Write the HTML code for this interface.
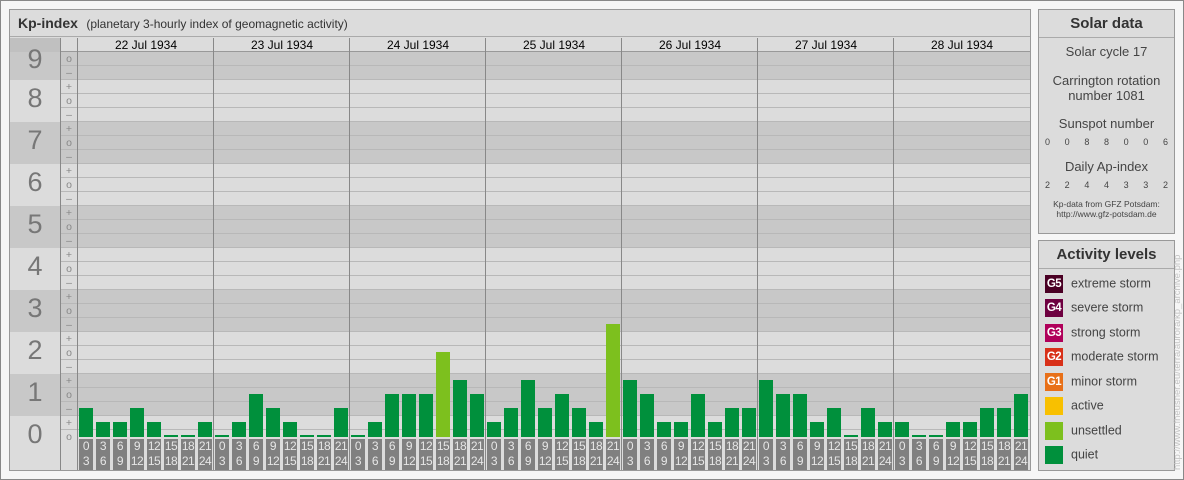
<!DOCTYPE html><html><head><style>
*{margin:0;padding:0;box-sizing:border-box}
body{width:1184px;height:480px;position:relative;background:#f6f6f6;font-family:"Liberation Sans",sans-serif;overflow:hidden}
.a{position:absolute}
#frame{left:0;top:0;width:1184px;height:480px;border:1px solid #888}
#main{left:9px;top:9px;width:1022px;height:462px;border:1px solid #999;background:#dcdcdc;overflow:hidden}
.band{position:absolute;left:0;width:1020px}
.dk{background:#c8c8c8}
.lt{background:#dcdcdc}
.num{position:absolute;left:0;width:50px;text-align:center;font-size:27px;color:#777}
.sub{position:absolute;left:51px;width:16px;text-align:center;font-size:10.5px;color:#888;line-height:14px}
.day{position:absolute;top:0;display:flex;gap:3px;align-items:flex-end}
.day div{width:14px;background:#00903c}
.day div.u{background:#7dc01e}
.lab{position:absolute;top:429px;display:flex;gap:3px}
.lab div{width:14px;height:31px;background:#808080;color:#e6e6e6;font-size:12px;line-height:15px;text-align:center;letter-spacing:-0.5px}
.dh{position:absolute;top:28px;width:136px;text-align:center;font-size:12px;color:#000;line-height:14px}
.vs{position:absolute;top:28px;width:1px;height:432px;background:#888}
.panel{position:absolute;left:1038px;width:137px;border:1px solid #999;background:#dcdcdc;color:#444}
.ph{height:28px;border-bottom:1px solid #aaa;text-align:center;font-weight:bold;font-size:15px;line-height:27px;color:#333}
.c{text-align:center;font-size:13px}
.row{display:flex;justify-content:space-between;padding:0 6px 0 6px;font-size:9px}
.lv{position:absolute;left:6px;font-size:12.5px;color:#444}
.lv span{display:inline-block;width:18px;height:18px;color:#fff;font-size:11.5px;font-weight:bold;text-align:center;line-height:18px;margin-right:8px;vertical-align:middle;letter-spacing:-0.5px}
</style></head><body>
<div class="a" id="frame"></div>
<div class="a" id="main">
 <div class="a" style="left:0;top:0;width:1020px;height:27px;border-bottom:1px solid #aaa;background:#dcdcdc;color:#333;line-height:26px;padding-left:8px"><b style="font-size:14px">Kp-index</b> <span style="font-size:12px;margin-left:4px">(planetary 3-hourly index of geomagnetic activity)</span></div>
 <div class="band dk" style="top:42px;height:28px"></div>
 <div class="band lt" style="top:70px;height:42px"></div>
 <div class="band dk" style="top:112px;height:42px"></div>
 <div class="band lt" style="top:154px;height:42px"></div>
 <div class="band dk" style="top:196px;height:42px"></div>
 <div class="band lt" style="top:238px;height:42px"></div>
 <div class="band dk" style="top:280px;height:42px"></div>
 <div class="band lt" style="top:322px;height:42px"></div>
 <div class="band dk" style="top:364px;height:42px"></div>
 <div class="band lt" style="top:406px;height:54px"></div>
 <div class="a" style="left:51px;top:28px;width:969px;height:14px;background:#dcdcdc;border-bottom:1px solid #999"></div>
 <div class="a" style="left:51px;top:42px;width:969px;height:378px;background:repeating-linear-gradient(to bottom,transparent 0,transparent 13px,#b8b8b8 13px,#b8b8b8 14px)"></div>
 <div class="a" style="left:0;top:28px;width:51px;height:14px;background:#c0c0c0"></div>
 <div class="num" style="top:34px">9</div><div class="num" style="top:73px">8</div><div class="num" style="top:115px">7</div><div class="num" style="top:157px">6</div><div class="num" style="top:199px">5</div><div class="num" style="top:241px">4</div><div class="num" style="top:283px">3</div><div class="num" style="top:325px">2</div><div class="num" style="top:367px">1</div><div class="num" style="top:409px">0</div>
 <div class="sub" style="top:42px">o<br>–<br>+<br>o<br>–<br>+<br>o<br>–<br>+<br>o<br>–<br>+<br>o<br>–<br>+<br>o<br>–<br>+<br>o<br>–<br>+<br>o<br>–<br>+<br>o<br>–<br>+<br>o</div>
 <div class="vs" style="left:50px"></div><div class="vs" style="left:67px"></div>
 <div class="vs" style="left:203px"></div><div class="vs" style="left:339px"></div><div class="vs" style="left:475px"></div><div class="vs" style="left:611px"></div><div class="vs" style="left:747px"></div><div class="vs" style="left:883px"></div>
 <div class="dh" style="left:68px">22 Jul 1934</div><div class="dh" style="left:204px">23 Jul 1934</div><div class="dh" style="left:340px">24 Jul 1934</div><div class="dh" style="left:476px">25 Jul 1934</div><div class="dh" style="left:612px">26 Jul 1934</div><div class="dh" style="left:748px">27 Jul 1934</div><div class="dh" style="left:884px">28 Jul 1934</div>
 <div class="day" style="left:69px;height:427px"><div style="height:29px"></div><div style="height:15px"></div><div style="height:15px"></div><div style="height:29px"></div><div style="height:15px"></div><div style="height:2px"></div><div style="height:2px"></div><div style="height:15px"></div></div>
 <div class="day" style="left:205px;height:427px"><div style="height:2px"></div><div style="height:15px"></div><div style="height:43px"></div><div style="height:29px"></div><div style="height:15px"></div><div style="height:2px"></div><div style="height:2px"></div><div style="height:29px"></div></div>
 <div class="day" style="left:341px;height:427px"><div style="height:2px"></div><div style="height:15px"></div><div style="height:43px"></div><div style="height:43px"></div><div style="height:43px"></div><div class="u" style="height:85px"></div><div style="height:57px"></div><div style="height:43px"></div></div>
 <div class="day" style="left:477px;height:427px"><div style="height:15px"></div><div style="height:29px"></div><div style="height:57px"></div><div style="height:29px"></div><div style="height:43px"></div><div style="height:29px"></div><div style="height:15px"></div><div class="u" style="height:113px"></div></div>
 <div class="day" style="left:613px;height:427px"><div style="height:57px"></div><div style="height:43px"></div><div style="height:15px"></div><div style="height:15px"></div><div style="height:43px"></div><div style="height:15px"></div><div style="height:29px"></div><div style="height:29px"></div></div>
 <div class="day" style="left:749px;height:427px"><div style="height:57px"></div><div style="height:43px"></div><div style="height:43px"></div><div style="height:15px"></div><div style="height:29px"></div><div style="height:2px"></div><div style="height:29px"></div><div style="height:15px"></div></div>
 <div class="day" style="left:885px;height:427px"><div style="height:15px"></div><div style="height:2px"></div><div style="height:2px"></div><div style="height:15px"></div><div style="height:15px"></div><div style="height:29px"></div><div style="height:29px"></div><div style="height:43px"></div></div>
 <div class="lab" style="left:69px"><div>0<br>3</div><div>3<br>6</div><div>6<br>9</div><div>9<br>12</div><div>12<br>15</div><div>15<br>18</div><div>18<br>21</div><div>21<br>24</div></div>
 <div class="lab" style="left:205px"><div>0<br>3</div><div>3<br>6</div><div>6<br>9</div><div>9<br>12</div><div>12<br>15</div><div>15<br>18</div><div>18<br>21</div><div>21<br>24</div></div>
 <div class="lab" style="left:341px"><div>0<br>3</div><div>3<br>6</div><div>6<br>9</div><div>9<br>12</div><div>12<br>15</div><div>15<br>18</div><div>18<br>21</div><div>21<br>24</div></div>
 <div class="lab" style="left:477px"><div>0<br>3</div><div>3<br>6</div><div>6<br>9</div><div>9<br>12</div><div>12<br>15</div><div>15<br>18</div><div>18<br>21</div><div>21<br>24</div></div>
 <div class="lab" style="left:613px"><div>0<br>3</div><div>3<br>6</div><div>6<br>9</div><div>9<br>12</div><div>12<br>15</div><div>15<br>18</div><div>18<br>21</div><div>21<br>24</div></div>
 <div class="lab" style="left:749px"><div>0<br>3</div><div>3<br>6</div><div>6<br>9</div><div>9<br>12</div><div>12<br>15</div><div>15<br>18</div><div>18<br>21</div><div>21<br>24</div></div>
 <div class="lab" style="left:885px"><div>0<br>3</div><div>3<br>6</div><div>6<br>9</div><div>9<br>12</div><div>12<br>15</div><div>15<br>18</div><div>18<br>21</div><div>21<br>24</div></div>
</div>
<div class="panel" style="top:9px;height:225px">
 <div class="ph">Solar data</div>
 <div class="c" style="margin-top:6px">Solar cycle 17</div>
 <div class="c" style="margin-top:14px;line-height:15px">Carrington rotation<br>number 1081</div>
 <div class="c" style="margin-top:13px">Sunspot number</div>
 <div class="row" style="margin-top:6px"><span>0</span><span>0</span><span>8</span><span>8</span><span>0</span><span>0</span><span>6</span></div>
 <div class="c" style="margin-top:12px">Daily Ap-index</div>
 <div class="row" style="margin-top:6px"><span>2</span><span>2</span><span>4</span><span>4</span><span>3</span><span>3</span><span>2</span></div>
 <div class="c" style="margin-top:9px;font-size:8.5px;line-height:10px">Kp-data from GFZ Potsdam:<br>http://www.gfz-potsdam.de</div>
</div>
<div class="panel" style="top:240px;height:231px">
 <div class="ph">Activity levels</div>
 <div class="lv" style="top:34px"><span style="background:#4a0024">G5</span>extreme storm</div>
 <div class="lv" style="top:58px"><span style="background:#6e0040">G4</span>severe storm</div>
 <div class="lv" style="top:83px"><span style="background:#b0005a">G3</span>strong storm</div>
 <div class="lv" style="top:107px"><span style="background:#d83018">G2</span>moderate storm</div>
 <div class="lv" style="top:132px"><span style="background:#e87018">G1</span>minor storm</div>
 <div class="lv" style="top:156px"><span style="background:#f8c000"></span>active</div>
 <div class="lv" style="top:181px"><span style="background:#7dc01e"></span>unsettled</div>
 <div class="lv" style="top:205px"><span style="background:#00903c"></span>quiet</div>
</div>
<div class="a" style="left:1172px;top:470px;width:230px;transform:rotate(-90deg);transform-origin:0 0;font-size:9.5px;color:#c4c4c4;white-space:nowrap;line-height:12px">http://www.fheusner.eu/terra/aurora/kp_archive.php</div>
</body></html>
